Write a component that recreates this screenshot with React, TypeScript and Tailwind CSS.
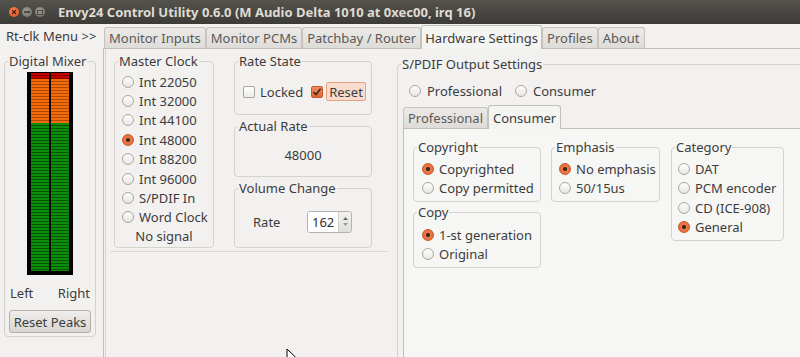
import type { ReactNode } from 'react'

// Envy24 control utility, "Hardware Settings" page, Ubuntu Ambiance look.

function Radio({ on = false }: { on?: boolean }) {
  return on ? (
    <span className="block w-[12px] h-[12px] shrink-0 rounded-full border border-[#c5582b] bg-[radial-gradient(circle,#3b2a22_0px,#3b2a22_1.6px,#ef7a46_2.4px,#e3622d_100%)]" />
  ) : (
    <span className="block w-[12px] h-[12px] shrink-0 rounded-full border border-[#aaa7a2] bg-gradient-to-b from-white to-[#e8e6e3]" />
  )
}

function RadioRow({ label, on = false, gap = 'gap-[5px]' }: { label: string; on?: boolean; gap?: string }) {
  return (
    <div className={`flex items-center h-[19.4px] whitespace-nowrap ${gap}`}>
      <Radio on={on} />
      <span>{label}</span>
    </div>
  )
}

function Frame({ label, className = '', children }: { label: string; className?: string; children: ReactNode }) {
  return (
    <fieldset className={`border border-[#d4d2cd] rounded-[4px] min-w-0 ${className}`}>
      <legend className="ml-[3px] px-[1px] leading-[16px] whitespace-nowrap">{label}</legend>
      {children}
    </fieldset>
  )
}

function Checkbox({ on = false }: { on?: boolean }) {
  if (!on) return <span className="block w-[12px] h-[12px] shrink-0 rounded-[2px] border border-[#a9a6a1] bg-gradient-to-b from-white to-[#ecebe8]" />
  return (
    <span className="flex items-center justify-center w-[12px] h-[12px] shrink-0 rounded-[2px] border border-[#c5582b] bg-gradient-to-b from-[#f28a5c] to-[#e5642e]">
      <svg width="10" height="10" viewBox="0 0 10 10">
        <path d="M1.5 5.2 L4 7.6 L8.6 1.8" fill="none" stroke="#3d2a20" strokeWidth="1.7" />
      </svg>
    </span>
  )
}

function Tab({ label, active = false, small = false }: { label: string; active?: boolean; small?: boolean }) {
  return active ? (
    <div className={`relative z-10 -mb-[1px] h-[24px] flex items-center ${small ? 'px-[4px]' : 'px-[3px]'} border border-b-0 border-[#c3c0bb] rounded-t-[3px] bg-[#f4f4f3] text-[#3c3c3c] whitespace-nowrap`}>
      {label}
    </div>
  ) : (
    <div className="h-[21px] flex items-center px-[4px] border border-b-0 border-[#c6c3be] rounded-t-[3px] bg-gradient-to-b from-[#ebeae7] to-[#dedcd8] text-[#5b5a58] whitespace-nowrap">
      {label}
    </div>
  )
}

function Meter() {
  const col = 'flex flex-col w-[18px]'
  const red = 'h-[6px] bg-[repeating-linear-gradient(to_bottom,#c20000_0px,#c20000_2px,#880000_2px,#880000_3px)]'
  const orange = 'h-[44px] bg-[repeating-linear-gradient(to_bottom,#f26c0c_0px,#f26c0c_2px,#b04700_2px,#b04700_3px)]'
  const green = 'flex-1 bg-[repeating-linear-gradient(to_bottom,#0c8d0c_0px,#0c8d0c_2px,#045404_2px,#045404_3px)]'
  return (
    <div className="mx-auto mt-[3px] w-[46px] h-[203px] bg-black pt-[1px] pb-[4px] px-[4px] flex gap-[2px]">
      {[0, 1].map(i => (
        <div key={i} className={col}>
          <div className={red} />
          <div className={orange} />
          <div className={green} />
        </div>
      ))}
    </div>
  )
}

export default function App() {
  return (
    <div className="relative w-[800px] h-[357px] overflow-hidden bg-[#f2f1f0] text-[13px] leading-[16px] text-[#3c3c3c] font-['Noto_Sans',sans-serif]">
      {/* title bar */}
      <div className="h-[24px] flex items-center pl-[9px] bg-gradient-to-b from-[#55534e] to-[#3c3b37]">
        <span className="flex items-center justify-center w-[10px] h-[10px] rounded-full bg-[radial-gradient(circle_at_40%_35%,#f7875a,#d9491d)]">
          <svg width="6" height="6" viewBox="0 0 6 6"><path d="M1 1L5 5M5 1L1 5" stroke="#4a1a0a" strokeWidth="1.2" /></svg>
        </span>
        <span className="ml-[3px] flex items-center justify-center w-[10px] h-[10px] rounded-full bg-[radial-gradient(circle_at_40%_35%,#9d9a93,#6f6c66)]">
          <span className="block w-[6px] h-[2px] bg-[#4d4b47]" />
        </span>
        <span className="ml-[3px] flex items-center justify-center w-[10px] h-[10px] rounded-full bg-[radial-gradient(circle_at_40%_35%,#9d9a93,#6f6c66)]">
          <span className="block w-[6px] h-[5px] border border-[#4d4b47]" />
        </span>
        <span className="ml-[13px] font-bold text-[13px] text-[#dfdbd2] whitespace-nowrap">
          Envy24 Control Utility 0.6.0 (M Audio Delta 1010 at 0xec00, irq 16)
        </span>
      </div>

      <div className="flex h-[333px]">
        {/* left column */}
        <div className="w-[103px] shrink-0 flex flex-col">
          <div className="h-[29px] pl-[6px] pt-[4px] whitespace-nowrap">Rt-clk Menu &gt;&gt;</div>
          <Frame label="Digital Mixer" className="ml-[4px] w-[92px]">
            <Meter />
            <div className="mt-[10px] flex justify-between px-[5px]">
              <span>Left</span>
              <span>Right</span>
            </div>
            <div className="mt-[9px] mx-[4px] mb-[3px] h-[23px] flex items-center justify-center rounded-[3px] border border-[#b3b0aa] bg-gradient-to-b from-[#efeeec] to-[#d8d6d2] whitespace-nowrap">
              Reset Peaks
            </div>
          </Frame>
        </div>

        {/* main notebook */}
        <div className="flex-1 min-w-0 flex flex-col">
          <div className="h-[24px] flex items-end pl-[1px]">
            <Tab label="Monitor Inputs" />
            <Tab label="Monitor PCMs" />
            <Tab label="Patchbay / Router" />
            <Tab label="Hardware Settings" active />
            <Tab label="Profiles" />
            <Tab label="About" />
          </div>
          <div className="flex-1 min-h-0 border-t border-l border-[#c1beb9] flex overflow-hidden">
            <div className="ml-[1px] border-l border-[#d6d4d0] flex flex-1 min-w-0">
              {/* left settings */}
              <div className="w-[284px] shrink-0 flex flex-col pt-[4px]">
                <div className="flex items-start gap-[20px] pl-[8px]">
                  <Frame label="Master Clock" className="w-[100px]">
                    <div className="pl-[7px] pt-[3px] pb-[2px]">
                      <RadioRow label="Int 22050" />
                      <RadioRow label="Int 32000" />
                      <RadioRow label="Int 44100" />
                      <RadioRow label="Int 48000" on />
                      <RadioRow label="Int 88200" />
                      <RadioRow label="Int 96000" />
                      <RadioRow label="S/PDIF In" />
                      <RadioRow label="Word Clock" />
                      <div className="h-[18px] flex items-center justify-center -ml-[7px]">No signal</div>
                    </div>
                  </Frame>
                  <div className="w-[138px] flex flex-col gap-[3px]">
                    <Frame label="Rate State">
                      <div className="h-[45px] flex items-center pl-[8px]">
                        <Checkbox />
                        <span className="ml-[5px]">Locked</span>
                        <span className="ml-[8px]"><Checkbox on /></span>
                        <span className="ml-[3px] h-[19px] px-[2px] flex items-center rounded-[2px] border border-[#eba07e] bg-[#f9dccd]">Reset</span>
                      </div>
                    </Frame>
                    <Frame label="Actual Rate">
                      <div className="h-[42px] flex items-center justify-center">48000</div>
                    </Frame>
                    <Frame label="Volume Change">
                      <div className="h-[51px] flex items-center justify-between pl-[18px] pr-[19px]">
                        <span>Rate</span>
                        <div className="h-[22px] w-[45px] flex rounded-[3px] border border-[#b6b3ad] overflow-hidden">
                          <div className="flex-1 bg-white flex items-center pl-[4px] text-[#2e2e2e]">162</div>
                          <div className="w-[13px] border-l border-[#d2d0cb] bg-gradient-to-b from-[#f3f2f0] to-[#e1dfdb] flex flex-col items-center justify-center gap-[3px]">
                            <svg width="5" height="3" viewBox="0 0 5 3"><path d="M0 3L2.5 0L5 3Z" fill="#6a6864" /></svg>
                            <svg width="5" height="3" viewBox="0 0 5 3"><path d="M0 0L2.5 3L5 0Z" fill="#9a9894" /></svg>
                          </div>
                        </div>
                      </div>
                    </Frame>
                  </div>
                </div>
                <div className="mt-[3px] ml-[4px] w-[278px] border-t border-[#dcdad6]" />
              </div>

              {/* S/PDIF output settings */}
              <Frame label="S/PDIF Output Settings" className="ml-[7px] mt-[7px] w-[420px] h-[400px] shrink-0">
                <div className="mt-[9px] flex items-center pl-[11px]">
                  <RadioRow label="Professional" gap="gap-[6px]" />
                  <span className="ml-[13px]"><RadioRow label="Consumer" gap="gap-[6px]" /></span>
                </div>
                <div className="ml-[5px] mt-[4px] flex flex-col">
                  <div className="h-[24px] flex items-end">
                    <Tab label="Professional" small />
                    <Tab label="Consumer" active small />
                  </div>
                  <div className="h-[300px] border-t border-l border-[#c1beb9] bg-[#f6f6f5] pl-[9px] pt-[10px] flex items-start gap-[10px]">
                    <div className="w-[128px] flex flex-col gap-[2px]">
                      <Frame label="Copyright">
                        <div className="pl-[8px] pt-[4px] pb-[3px]">
                          <RadioRow label="Copyrighted" on />
                          <RadioRow label="Copy permitted" />
                        </div>
                      </Frame>
                      <Frame label="Copy">
                        <div className="pl-[8px] pt-[5px] pb-[3px]">
                          <RadioRow label="1-st generation" on />
                          <RadioRow label="Original" />
                        </div>
                      </Frame>
                    </div>
                    <Frame label="Emphasis" className="w-[109px]">
                      <div className="pl-[7px] pt-[4px] pb-[3px]">
                        <RadioRow label="No emphasis" on />
                        <RadioRow label="50/15us" />
                      </div>
                    </Frame>
                    <Frame label="Category" className="ml-[1px] w-[113px]">
                      <div className="pl-[6px] pt-[4px] pb-[3px]">
                        <RadioRow label="DAT" />
                        <RadioRow label="PCM encoder" />
                        <RadioRow label="CD (ICE-908)" />
                        <RadioRow label="General" on />
                      </div>
                    </Frame>
                  </div>
                </div>
              </Frame>
            </div>
          </div>
        </div>
      </div>

      {/* mouse pointer */}
      <svg className="absolute left-[286px] top-[348px]" width="12" height="18" viewBox="0 0 12 18">
        <path d="M1 1L1 15L4.5 11.5L7 17L9 16L6.6 10.6L11 10.6Z" fill="white" stroke="black" strokeWidth="1" />
      </svg>
    </div>
  )
}
